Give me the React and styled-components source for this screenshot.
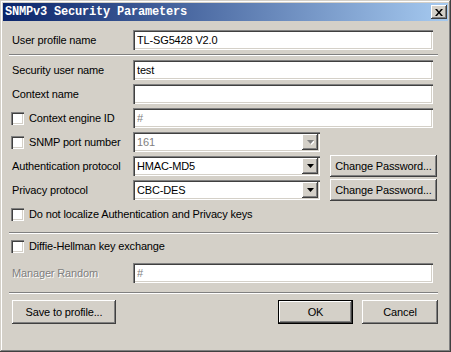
import React from "react";
import styled, { createGlobalStyle, css } from "styled-components";

const GlobalStyle = createGlobalStyle`
  html, body {
    margin: 0;
    padding: 0;
    background: #d4d0c8;
    overflow: hidden;
  }
  * {
    box-sizing: border-box;
  }
`;

const sunken = css`
  box-shadow: inset 1px 1px #808080, inset 2px 2px #404040,
    inset -1px -1px #ffffff, inset -2px -2px #d4d0c8;
`;

const raised = css`
  box-shadow: inset -1px -1px #404040, inset 1px 1px #ffffff,
    inset -2px -2px #808080, inset 2px 2px #d4d0c8;
`;

const Window = styled.div`
  width: 451px;
  height: 352px;
  padding: 3px;
  background: #d4d0c8;
  font-family: "Liberation Sans", Arial, sans-serif;
  font-size: 11px;
  letter-spacing: -0.15px;
  color: #000;
  box-shadow: inset -1px -1px #404040, inset 1px 1px #d4d0c8,
    inset -2px -2px #808080, inset 2px 2px #ffffff;
  display: flex;
  flex-direction: column;
`;

const TitleBar = styled.div`
  height: 18px;
  display: flex;
  align-items: center;
  justify-content: space-between;
  padding: 0 1px 0 2px;
  background: linear-gradient(to right, #0a246a, #a6caf0);
`;

const Title = styled.span`
  font-family: "Liberation Mono", "Courier New", monospace;
  font-weight: bold;
  font-size: 12px;
  color: #ffffff;
  letter-spacing: -0.2px;
`;

const CloseButton = styled.div`
  width: 16px;
  height: 14px;
  background: #d4d0c8;
  ${raised};
  display: flex;
  align-items: center;
  justify-content: center;
`;

const Body = styled.div`
  flex: 1;
  padding: 9px 10px 0 8px;
  display: flex;
  flex-direction: column;
`;

const Row = styled.div`
  height: 20px;
  display: flex;
  align-items: center;
  margin-top: ${({ $top }) => $top ?? 4}px;
`;

const Label = styled.span`
  width: 122px;
  flex-shrink: 0;
  padding-left: 1px;
  white-space: nowrap;
  ${({ $disabled }) =>
    $disabled &&
    css`
      color: #808080;
      text-shadow: 1px 1px #ffffff;
    `}
`;

const CheckLabel = styled.label`
  width: ${({ $wide }) => ($wide ? "auto" : "122px")};
  flex-shrink: 0;
  display: flex;
  align-items: center;
  gap: 5px;
  white-space: nowrap;
`;

const CheckBox = styled.span`
  width: 13px;
  height: 13px;
  background: #ffffff;
  ${sunken};
  display: inline-block;
`;

const TextInput = styled.input`
  width: 300px;
  height: 20px;
  border: none;
  outline: none;
  padding: 0 4px;
  background: #ffffff;
  font-family: "Liberation Sans", Arial, sans-serif;
  font-size: 11px;
  letter-spacing: -0.15px;
  color: ${({ disabled }) => (disabled ? "#808080" : "#000")};
  ${sunken};
`;

const Combo = styled.div`
  width: 187px;
  height: 20px;
  background: #ffffff;
  ${sunken};
  display: flex;
  align-items: center;
  justify-content: space-between;
  padding: 2px 2px 2px 4px;
  color: ${({ $disabled }) => ($disabled ? "#808080" : "#000")};
`;

const ArrowButton = styled.span`
  width: 16px;
  height: 16px;
  background: #d4d0c8;
  ${raised};
  display: flex;
  align-items: center;
  justify-content: center;
`;

const Separator = styled.div`
  height: 2px;
  margin: ${({ $top }) => $top}px 0 0 -2px;
  border-top: 1px solid #808080;
  border-bottom: 1px solid #ffffff;
`;

const Button = styled.button`
  width: ${({ $w }) => $w}px;
  height: ${({ $h }) => $h || 24}px;
  border: ${({ $default }) => ($default ? "1px solid #000" : "none")};
  padding: 0;
  background: #d4d0c8;
  font-family: "Liberation Sans", Arial, sans-serif;
  font-size: 11px;
  letter-spacing: -0.15px;
  color: #000;
  flex-shrink: 0;
  ${raised};
`;

const ChangeButton = styled(Button)`
  margin-left: 10px;
`;

const ButtonBar = styled.div`
  margin-top: 6px;
  display: flex;
  align-items: center;
  padding-left: 1px;
  gap: 9px;
`;

const Spacer = styled.div`
  flex: 1;
`;

const Arrow = ({ disabled }) => (
  <svg width="7" height="5" viewBox="0 0 7 5">
    {disabled && <path d="M1 1h7l-3.5 4z" fill="#ffffff" />}
    <path d="M0 0h7l-3.5 4z" fill={disabled ? "#808080" : "#000"} />
  </svg>
);

const ComboBox = ({ value, disabled }) => (
  <Combo $disabled={disabled}>
    <span>{value}</span>
    <ArrowButton>
      <Arrow disabled={disabled} />
    </ArrowButton>
  </Combo>
);

const Check = ({ children, wide }) => (
  <CheckLabel $wide={wide}>
    <CheckBox />
    {children}
  </CheckLabel>
);

export default function App() {
  return (
    <>
      <GlobalStyle />
      <Window>
        <TitleBar>
          <Title>SNMPv3 Security Parameters</Title>
          <CloseButton>
            <svg width="8" height="7" viewBox="0 0 8 7">
              <path d="M0 0h2l2 2.5 2-2.5h2L5 3.5 8 7H6L4 4.5 2 7H0l3-3.5z" fill="#000" />
            </svg>
          </CloseButton>
        </TitleBar>
        <Body>
          <Row $top={0}>
            <Label>User profile name</Label>
            <TextInput readOnly defaultValue="TL-SG5428 V2.0" />
          </Row>
          <Separator $top={4} />
          <Row>
            <Label>Security user name</Label>
            <TextInput readOnly defaultValue="test" />
          </Row>
          <Row>
            <Label>Context name</Label>
            <TextInput readOnly defaultValue="" />
          </Row>
          <Row>
            <Check>Context engine ID</Check>
            <TextInput disabled defaultValue="#" />
          </Row>
          <Row>
            <Check>SNMP port number</Check>
            <ComboBox value="161" disabled />
          </Row>
          <Row>
            <Label>Authentication protocol</Label>
            <ComboBox value="HMAC-MD5" />
            <ChangeButton $w={107} $h={22}>Change Password...</ChangeButton>
          </Row>
          <Row>
            <Label>Privacy protocol</Label>
            <ComboBox value="CBC-DES" />
            <ChangeButton $w={107} $h={22}>Change Password...</ChangeButton>
          </Row>
          <Row>
            <Check wide>Do not localize Authentication and Privacy keys</Check>
          </Row>
          <Separator $top={8} />
          <Row $top={2}>
            <Check wide>Diffie-Hellman key exchange</Check>
          </Row>
          <Row $top={7}>
            <Label $disabled>Manager Random</Label>
            <TextInput disabled defaultValue="#" />
          </Row>
          <Separator $top={9} />
          <ButtonBar>
            <Button $w={104}>Save to profile...</Button>
            <Spacer />
            <Button $w={75} $default>OK</Button>
            <Button $w={76}>Cancel</Button>
          </ButtonBar>
        </Body>
      </Window>
    </>
  );
}
